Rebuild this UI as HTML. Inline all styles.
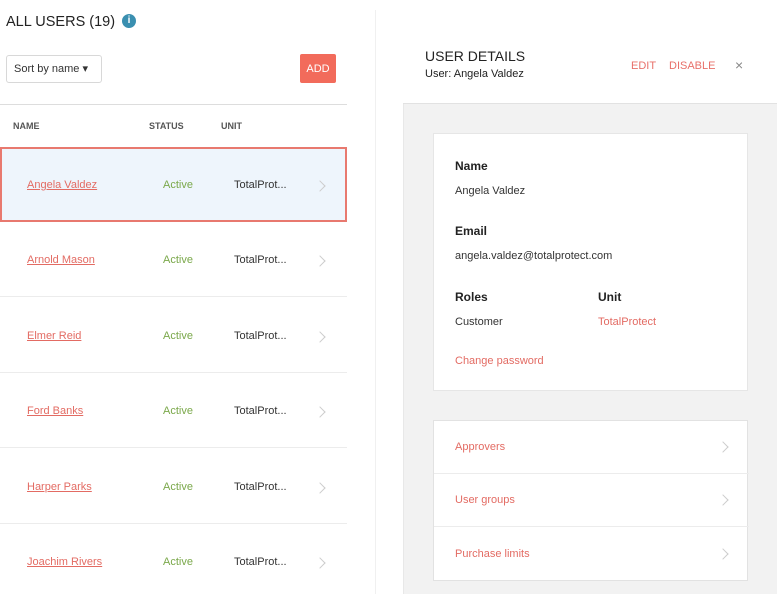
<!DOCTYPE html><html><head><style>
*{margin:0;padding:0;box-sizing:border-box}
body{width:777px;height:594px;overflow:hidden;background:#fff;font-family:"Liberation Sans",sans-serif;position:relative;color:#333}
.a{position:absolute}
.red{color:#e8706a}
.row{position:absolute;left:0;width:347px;height:75px;border-bottom:1px solid #ececec;font-size:11px}
.row span{position:absolute;top:32px}
.row .n{left:27px;color:#e36b63;text-decoration:underline}
.row .s{left:163px;color:#7aa84a}
.row .u{left:234px;color:#333}
.chev{position:absolute;width:8px;height:8px;border-top:1.3px solid #ccc;border-right:1.3px solid #ccc;transform:rotate(45deg)}
.lbl{font-size:12px;font-weight:bold;color:#222}
.val{font-size:11px;color:#333}
.li{position:absolute;left:0;width:315px;height:53px;border-bottom:1px solid #ececec;font-size:11px;color:#e36b63}
</style></head><body>
<div class="a" style="left:6px;top:14px;font-size:14.5px;color:#222">ALL USERS (19)</div>
<div class="a" style="left:122px;top:14px;width:14px;height:14px;border-radius:50%;background:#3a8fb0;color:#fff;font-size:10px;font-weight:bold;text-align:center;line-height:14px">i</div>
<div class="a" style="left:6px;top:55px;width:96px;height:28px;border:1px solid #d8d8d8;border-radius:3px;font-size:11px;line-height:26px;padding-left:7px">Sort by name ▾</div>
<div class="a" style="left:300px;top:54px;width:36px;height:29px;background:#f26b5b;border-radius:2px;color:#fff;font-size:11px;display:flex;align-items:center;justify-content:center">ADD</div>
<div class="a" style="left:0;top:104px;width:347px;height:1px;background:#ddd"></div>
<div class="a" style="left:13px;top:121px;font-size:9px;font-weight:bold;color:#555">NAME</div>
<div class="a" style="left:149px;top:121px;font-size:9px;font-weight:bold;color:#555">STATUS</div>
<div class="a" style="left:221px;top:121px;font-size:9px;font-weight:bold;color:#555">UNIT</div>
<div class="row" style="top:147px;background:#eef5fc;border:2px solid #e8796f;height:75px"><span class="n" style="left:25px;top:30px">Angela Valdez</span><span class="s" style="left:161px;top:30px">Active</span><span class="u" style="left:232px;top:30px">TotalProt...</span><i class="chev" style="left:314px;top:33px"></i></div>
<div class="row" style="top:222px"><span class="n">Arnold Mason</span><span class="s">Active</span><span class="u">TotalProt...</span><i class="chev" style="left:316px;top:35px"></i></div>
<div class="row" style="top:298px"><span class="n">Elmer Reid</span><span class="s">Active</span><span class="u">TotalProt...</span><i class="chev" style="left:316px;top:35px"></i></div>
<div class="row" style="top:373px"><span class="n">Ford Banks</span><span class="s">Active</span><span class="u">TotalProt...</span><i class="chev" style="left:316px;top:35px"></i></div>
<div class="row" style="top:449px"><span class="n">Harper Parks</span><span class="s">Active</span><span class="u">TotalProt...</span><i class="chev" style="left:316px;top:35px"></i></div>
<div class="row" style="top:524px;border:none"><span class="n">Joachim Rivers</span><span class="s">Active</span><span class="u">TotalProt...</span><i class="chev" style="left:316px;top:35px"></i></div>
<div class="a" style="left:375px;top:10px;width:1px;height:584px;background:#f0f0f0"></div>
<div class="a" style="left:403px;top:13px;width:374px;height:581px;background:#f2f2f2;border-left:1px solid #e8e8e8"></div>
<div class="a" style="left:403px;top:13px;width:374px;height:91px;background:#fff;border-bottom:1px solid #e2e2e2"></div>
<div class="a" style="left:425px;top:48px;font-size:14px;color:#222">USER DETAILS</div>
<div class="a" style="left:425px;top:68px;font-size:11px;color:#222">User: Angela Valdez</div>
<div class="a red" style="left:631px;top:60px;font-size:11px">EDIT</div>
<div class="a red" style="left:669px;top:60px;font-size:11px">DISABLE</div>
<div class="a" style="left:735px;top:57px;font-size:14px;color:#888">×</div>
<div class="a" style="left:433px;top:133px;width:315px;height:258px;background:#fff;border:1px solid #e6e6e6">
<div class="a lbl" style="left:21px;top:25px">Name</div>
<div class="a val" style="left:21px;top:51px">Angela Valdez</div>
<div class="a lbl" style="left:21px;top:90px">Email</div>
<div class="a val" style="left:21px;top:116px">angela.valdez@totalprotect.com</div>
<div class="a lbl" style="left:21px;top:156px">Roles</div>
<div class="a val" style="left:21px;top:182px">Customer</div>
<div class="a lbl" style="left:164px;top:156px">Unit</div>
<div class="a val red" style="left:164px;top:182px;color:#e36b63">TotalProtect</div>
<div class="a val" style="left:21px;top:221px;color:#e36b63">Change password</div>
</div>
<div class="a" style="left:433px;top:420px;width:315px;height:161px;background:#fff;border:1px solid #e2e2e2">
<div class="li" style="top:0"><span class="a" style="left:21px;top:20px">Approvers</span><i class="chev" style="left:285px;top:22px"></i></div>
<div class="li" style="top:53px"><span class="a" style="left:21px;top:20px">User groups</span><i class="chev" style="left:285px;top:22px"></i></div>
<div class="li" style="top:106px;border:none"><span class="a" style="left:21px;top:21px">Purchase limits</span><i class="chev" style="left:285px;top:23px"></i></div>
</div>
</body></html>
